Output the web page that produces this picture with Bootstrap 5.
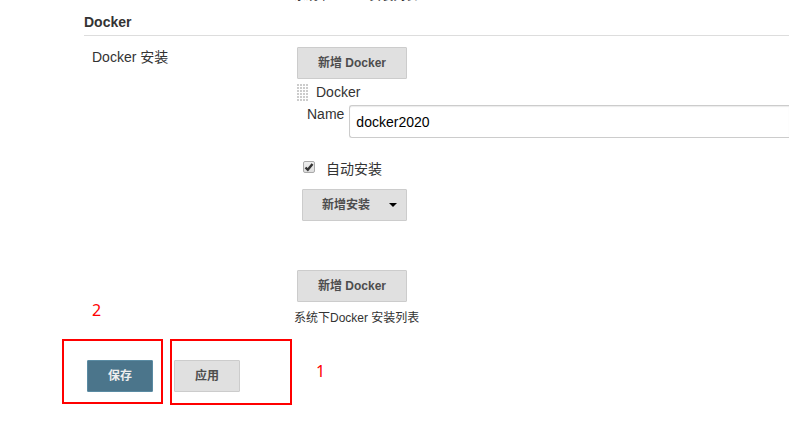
<!DOCTYPE html>
<html lang="zh-CN">
<head>
<meta charset="utf-8">
<meta name="viewport" content="width=device-width, initial-scale=1">
<title>Docker 安装</title>
<link href="https://cdn.jsdelivr.net/npm/bootstrap@5.3.0/dist/css/bootstrap.min.css" rel="stylesheet">
<style>
body { font-family: "Liberation Sans", "Noto Sans CJK SC", sans-serif; font-size: 14px; line-height: 20px; color: #333; background: #fff; overflow: hidden; }
.form-area { margin-left: 84px; }
.name-col { width: 210px; padding-left: 8px; }
.help { font-size: 12px; line-height: 18px; }
.help-prev { margin-top: -13px; }
.section-title { font-size: 14px; line-height: 20px; font-weight: 700; margin: 7px 0 0; padding-bottom: 3px; border-bottom: 1px solid #ddd; }
.setting-row { padding-top: 11px; }
.tool-btn { height: 32px; padding: 0 20px; border: 1px solid #ccc; border-radius: 1px; background: #e0e0e0; color: #4d4d4d; font-size: 12px; line-height: 30px; font-weight: 700; }
.tool-btn:hover { background: #d5d5d5; border-color: #bbb; color: #333; }
.add-btn { width: 110px; margin-left: 3px; padding: 0; }
.menu-btn { width: 105px; padding: 0 9px 0 19px; }
.save-btn, .save-btn:hover { background: #4b758b; border-color: #5a8ba3; color: #eee; }
.tool-item { margin-left: 3px; }
.tool-head { padding-top: 3px; gap: 7px; }
.tool-name { padding: 2px 5px 0 10px; }
.grip { width: 12px; height: 17px; background: radial-gradient(circle at 1px 1px, #ccc 1px, transparent 1px) 0 0 / 3px 3px; }
.name-input { height: 33px; margin-top: 3px; padding: 0 6px; font-size: 14px; color: #000; border: 1px solid #ccc; border-right: 0; border-radius: 3px 0 0 3px; box-shadow: inset 0 1px 1px rgba(0,0,0,.08); }
.auto-row { margin: 21px 0 10px 6px; }
.auto-label { padding-left: 11px; }
.tick { appearance: none; width: 12px; height: 12px; margin: 0; border: 1px solid #aaa; border-radius: 2px; background: linear-gradient(#eee, #ddd); }
.tick-box { display: grid; margin-bottom: 4px; }
.tick-box > * { grid-area: 1 / 1; }
.tick-box svg { pointer-events: none; visibility: hidden; }
.tick:checked + svg { visibility: visible; }
.menu-wrap { margin-left: 5px; }
.footer-add { margin-top: 49px; }
.note { font: 16px/16px "Noto Sans", sans-serif; color: #f00; }
.help-below { margin-top: 7px; }
.marked { border: 2px solid #f00; padding: 19px 8px 10px 23px; }
.marked-wide { padding: 19px 50px 11px 2px; }
.actions { margin: 12px 0 0 62px; gap: 7px; }
.actions .tool-btn { width: 66px; padding: 0; }
.note-apply { margin: 24px 0 0 17px; }
</style>
<script src="https://cdn.jsdelivr.net/npm/bootstrap@5.3.0/dist/js/bootstrap.bundle.min.js"></script>
</head>
<body>
<form>
  <main class="form-area">
    <div class="d-flex help-prev">
      <div class="name-col flex-shrink-0"></div>
      <div class="help">系统下Maven 安装列表</div>
    </div>
    <h2 class="section-title">Docker</h2>
    <section class="d-flex setting-row">
      <div class="name-col flex-shrink-0">Docker 安装</div>
      <div class="flex-grow-1">
        <button type="button" class="btn tool-btn add-btn d-block">新增 Docker</button>
        <div class="tool-item">
          <div class="d-flex align-items-center tool-head">
            <span class="grip"></span><span>Docker</span>
          </div>
          <div class="d-flex">
            <label for="tool-name" class="tool-name">Name</label>
            <input id="tool-name" type="text" class="form-control name-input" value="docker2020">
          </div>
          <div class="d-flex align-items-center auto-row">
            <span class="tick-box">
              <input id="auto" class="tick" type="checkbox" checked>
              <svg width="12" height="12" viewBox="0 0 12 12" aria-hidden="true"><path d="M2.5 6.5 4.8 8.8 9.5 3" fill="none" stroke="#333" stroke-width="2.4"/></svg>
            </span>
            <label for="auto" class="auto-label">自动安装</label>
          </div>
          <div class="menu-wrap">
            <button type="button" class="btn tool-btn menu-btn d-flex align-items-center justify-content-between">新增安装
              <svg width="8" height="4" viewBox="0 0 8 4" aria-hidden="true"><path d="M0 0h8L4 4z" fill="#000"/></svg>
            </button>
          </div>
        </div>
        <button type="button" class="btn tool-btn add-btn footer-add d-block">新增 Docker</button>
      </div>
    </section>
    <div class="d-flex">
      <div class="name-col flex-shrink-0 note">2</div>
      <div class="help help-below">系统下Docker 安装列表</div>
    </div>
  </main>
  <footer class="d-flex align-items-start actions">
    <div class="marked"><button type="submit" class="btn tool-btn save-btn d-block">保存</button></div>
    <div class="marked marked-wide"><button type="button" class="btn tool-btn d-block">应用</button></div>
    <span class="note note-apply">1</span>
  </footer>
</form>
</body>
</html>
